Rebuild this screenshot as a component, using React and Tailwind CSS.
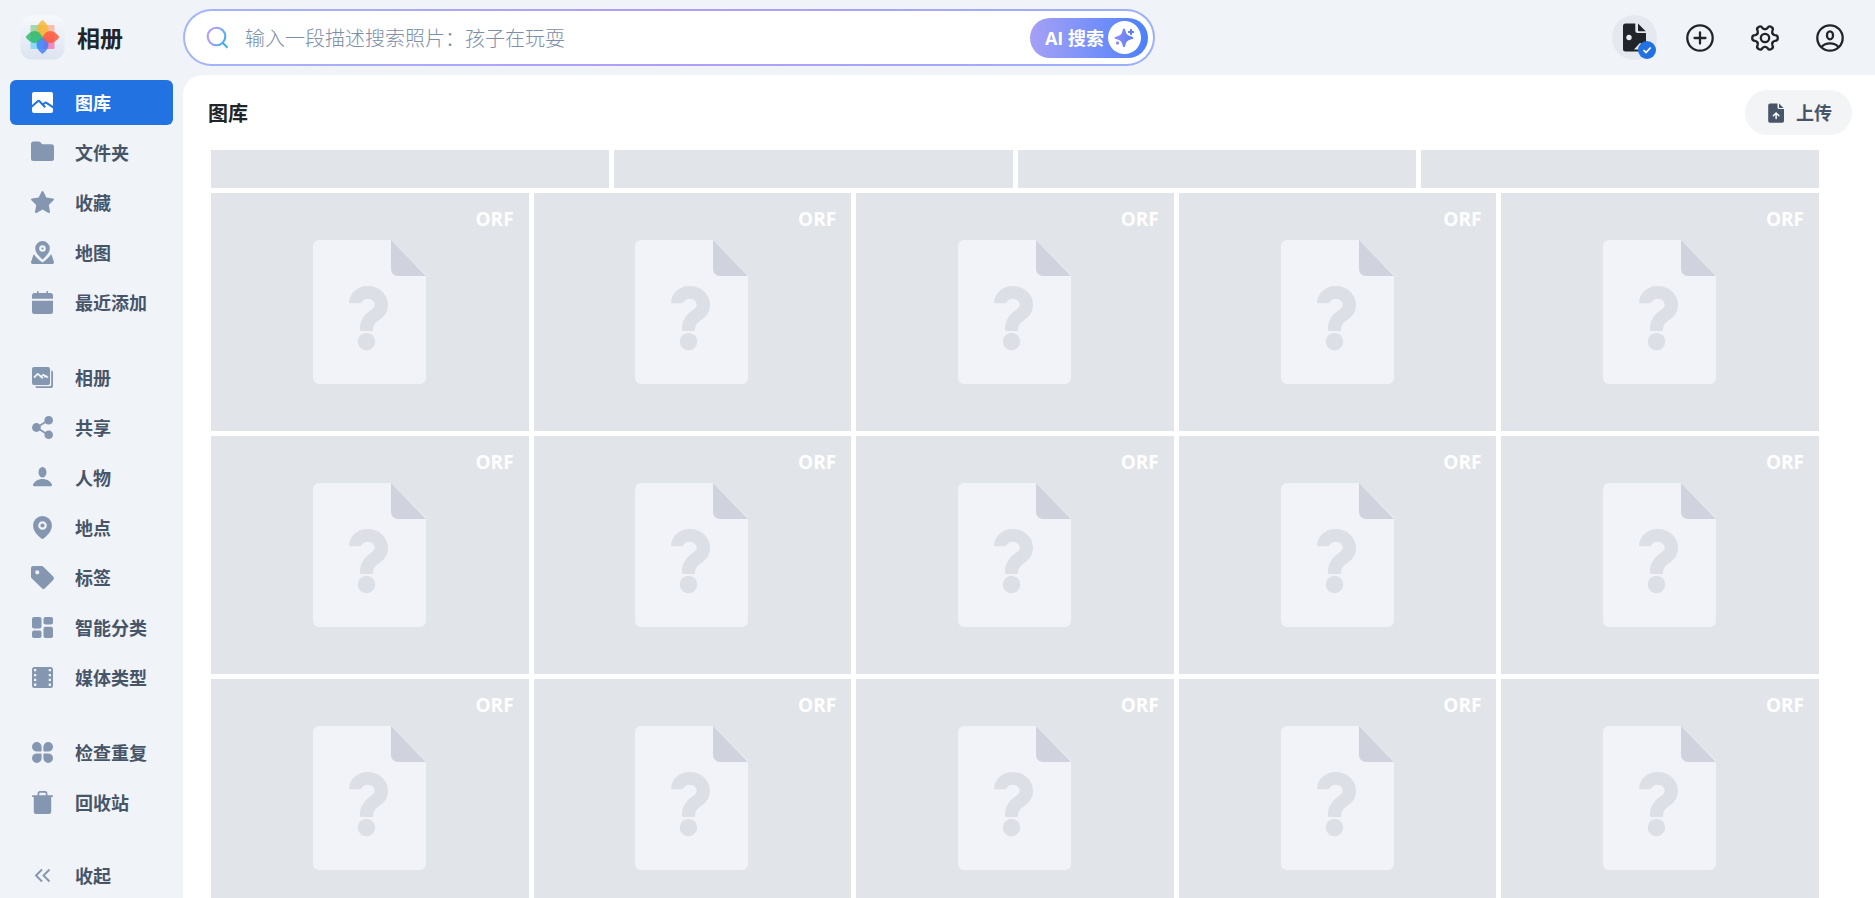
import React from 'react';
import { clsx } from 'clsx';

const icons = {
    gallery: (
        <>
            <rect x="2" y="2" width="21" height="21" rx="2" />
            <path d="M1 17.300l6.700-6.100a1.300 1.300 0 0 1 1.800 0l5.700 6M13 14.500l1.800-1.600a1.300 1.300 0 0 1 1.700 0l7.500 5" fill="none" stroke="#2273e1" strokeWidth="2" />
        </>
    ),
    folder: <path d="M3.500 1.500h5.200c.8 0 1.400.3 1.900.9l1.600 1.800h9.300A2.500 2.500 0 0 1 24 6.700v11.800a2.500 2.500 0 0 1-2.500 2.500h-18A2.500 2.500 0 0 1 1 18.500V4a2.500 2.500 0 0 1 2.500-2.500z" />,
    star: <path d="M11.600 1.600a1 1 0 0 1 1.800 0l2.900 6 6.700.9a1 1 0 0 1 .6 1.800l-4.800 4.600 1.200 6.900a1 1 0 0 1-1.500 1.100l-6-3.300-6 3.300A1 1 0 0 1 5 21.800l1.200-6.900-4.800-4.600A1 1 0 0 1 2 8.500l6.700-.9z" />,
    map: (
        <>
            <path fillRule="evenodd" d="M12.500 1a7.300 7.300 0 0 1 7.300 7.300c0 4.400-3.500 7.600-7.300 11.200-3.800-3.600-7.300-6.800-7.300-11.200A7.300 7.300 0 0 1 12.500 1zm0 4.200a3.300 3.300 0 1 0 0 6.600 3.300 3.300 0 0 0 0-6.600z" />
            <circle cx="12.500" cy="8.500" r="1.100" />
            <path d="M4.200 14.500c1.800 3 5 5.600 8.300 8 3.300-2.400 6.500-5 8.300-8 .5.100.8.500 1 1l2.100 6.300a1.600 1.600 0 0 1-1.500 2.200H2.600a1.600 1.600 0 0 1-1.500-2.200l2.100-6.300c.2-.5.500-.9 1-1z" />
        </>
    ),
    calendar: (
        <path d="M7 1.800a.8.800 0 0 1 1.600 0V3h7.800V1.800a.8.800 0 0 1 1.600 0V3h2.500A2.500 2.500 0 0 1 23 5.500v3.200H2V5.500A2.500 2.500 0 0 1 4.500 3H7zM2 10.700h21v10.800a2.500 2.500 0 0 1-2.500 2.500h-16A2.500 2.500 0 0 1 2 21.500z" />
    ),
    album: (
        <>
            <rect x="2" y="2" width="18" height="18" rx="2" />
            <path d="M4 12.500l3.200-3.200a.9.900 0 0 1 1.300 0l4.300 4M11.300 11.700l1.600-1.500a.9.900 0 0 1 1.300.1l1 1.500.9-.7 1.900 1.500" fill="none" stroke="#f0f3f8" strokeWidth="1.800" />
            <path d="M21.200 5.500c1.200 0 1.800.6 1.800 1.700V21c0 1.200-.8 2-2 2H7.200c-1.200 0-1.800-.7-1.800-1.800h14.300c.9 0 1.500-.6 1.500-1.500z" />
        </>
    ),
    share: (
        <>
            <path d="M6.500 12.500l12-7.300M6.500 12.500l12 7.500" stroke="currentColor" strokeWidth="1.800" />
            <circle cx="6.400" cy="12.500" r="4.400" />
            <circle cx="18.700" cy="5.300" r="4.300" />
            <circle cx="18.700" cy="19.700" r="4.300" />
        </>
    ),
    person: (
        <>
            <ellipse cx="12.500" cy="7.200" rx="4" ry="5.200" />
            <path d="M12.500 14c4.300 0 7.800 2.200 9.400 5.500.4.900-.2 1.700-1.100 1.700H4.200c-.9 0-1.500-.8-1.100-1.700C4.700 16.200 8.200 14 12.500 14z" />
        </>
    ),
    place: (
        <>
            <path fillRule="evenodd" d="M12.500 1a9.400 9.400 0 0 1 9.400 9.400c0 5.300-4 9.500-8.300 13.200a1.700 1.700 0 0 1-2.200 0C7.100 19.900 3.100 15.700 3.100 10.400A9.400 9.400 0 0 1 12.500 1zm0 5.200a4.300 4.300 0 1 0 0 8.600 4.300 4.300 0 0 0 0-8.600z" />
            <circle cx="12.500" cy="10.500" r="2.100" />
        </>
    ),
    tag: <path fillRule="evenodd" d="M3 1h8.500a3 3 0 0 1 2.100.9l9.600 9.700a2.500 2.500 0 0 1 0 3.500l-8 8a2.500 2.500 0 0 1-3.500 0l-9.800-9.600a3 3 0 0 1-.9-2.100V3a2 2 0 0 1 2-2zm4.300 4.200a2.100 2.100 0 1 0 0 4.200 2.100 2.100 0 0 0 0-4.200z" />,
    category: (
        <>
            <rect x="2" y="2" width="9.500" height="11.500" rx="2" />
            <rect x="13.500" y="2" width="9.500" height="7.500" rx="2" />
            <rect x="2" y="15.500" width="9.500" height="7.500" rx="2" />
            <rect x="13.500" y="11.700" width="9.500" height="11.300" rx="2" />
        </>
    ),
    film: (
        <>
            <rect x="2" y="2" width="21" height="21" rx="2.500" />
            <path d="M4 4h2.300v2.300H4zM4 8.900h2.300v2.300H4zM4 13.700h2.300V16H4zM4 18.600h2.300v2.300H4zM18.700 4H21v2.300h-2.300zM18.700 8.900H21v2.300h-2.300zM18.700 13.700H21V16h-2.300zM18.700 18.600H21v2.300h-2.300z" fill="#f0f3f8" />
        </>
    ),
    duplicate: (
        <path d="M6.800 2a4.800 4.800 0 0 1 4.800 4.800v3.700c0 .6-.5 1.100-1.100 1.100H6.800A4.800 4.800 0 0 1 6.800 2zM18.200 2a4.800 4.800 0 0 1 0 9.600h-3.700c-.6 0-1.100-.5-1.100-1.100V6.800A4.800 4.800 0 0 1 18.200 2zM6.800 13.400h3.700c.6 0 1.100.5 1.100 1.100v3.700a4.800 4.800 0 1 1-4.800-4.800zM14.500 13.400h3.700a4.800 4.800 0 1 1-4.800 4.800v-3.700c0-.6.500-1.100 1.100-1.100z" />
    ),
    trash: (
        <>
            <path d="M8.400 6V3.500c0-.9.700-1.600 1.600-1.600h5c.9 0 1.600.7 1.600 1.600V6" fill="none" stroke="currentColor" strokeWidth="1.700" />
            <path d="M2.800 5.200h19.400a.8.800 0 0 1 0 1.700H21.200V21.500a2.500 2.500 0 0 1-2.500 2.500H6.300a2.500 2.500 0 0 1-2.500-2.500V6.900H2.800a.8.800 0 0 1 0-1.700z" />
        </>
    ),
    collapse: <path d="M12 6.500l-6 6 6 6M19.500 6.500l-6 6 6 6" fill="none" stroke="currentColor" strokeWidth="1.900" />,
};

const navGroups = [
    [
        { icon: 'gallery', label: '图库', active: true },
        { icon: 'folder', label: '文件夹' },
        { icon: 'star', label: '收藏' },
        { icon: 'map', label: '地图' },
        { icon: 'calendar', label: '最近添加' },
    ],
    [
        { icon: 'album', label: '相册' },
        { icon: 'share', label: '共享' },
        { icon: 'person', label: '人物' },
        { icon: 'place', label: '地点' },
        { icon: 'tag', label: '标签' },
        { icon: 'category', label: '智能分类' },
        { icon: 'film', label: '媒体类型' },
    ],
    [
        { icon: 'duplicate', label: '检查重复' },
        { icon: 'trash', label: '回收站' },
    ],
];

const Logo = () => (
    <svg className="size-[45px]" viewBox="0 0 45 45" aria-hidden="true">
        <defs>
            <linearGradient id="logo-bg" x1="0" y1="0" x2="0" y2="1">
                <stop offset="0" stopColor="#f6f9fc" />
                <stop offset="1" stopColor="#dce4f0" />
            </linearGradient>
        </defs>
        <rect x=".5" y=".5" width="44" height="44" rx="11" fill="url(#logo-bg)" />
        <g transform="translate(22.500 22)">
            <rect x="-12" y="-12" width="12" height="12" rx="1" fill="#7fce8c" opacity=".7" />
            <rect y="-12" width="12" height="12" rx="1" fill="#fba98a" opacity=".7" />
            <rect x="-12" width="12" height="12" rx="1" fill="#6fd2f5" opacity=".75" />
            <rect width="12" height="12" rx="1" fill="#fb5fa8" opacity=".7" />
            <path d="M0 0C-8-4-8-11 0-17 8-11 8-4 0 0z" fill="#f9b52e" opacity=".8" />
            <path d="M0 0C-8 4-8 11 0 17 8 11 8 4 0 0z" fill="#3d7dfb" opacity=".8" />
            <path d="M0 0C-4-8-11-8-17 0-11 8-4 8 0 0z" fill="#2bb568" opacity=".8" />
            <path d="M0 0C4-8 11-8 17 0 11 8 4 8 0 0z" fill="#fb5a3c" opacity=".85" />
        </g>
    </svg>
);

const NavItem = ({ icon, label, active }) => (
    <button
        className={clsx(
            'flex h-[45px] w-full shrink-0 items-center gap-5 rounded-md px-5 text-[18px] font-bold',
            active ? 'bg-[#2273e1] text-white' : 'text-[#475569]'
        )}
    >
        <svg className={clsx('size-[25px] shrink-0', !active && 'text-[#8496b0]')} viewBox="0 0 25 25" fill="currentColor" aria-hidden="true">
            {icons[icon]}
        </svg>
        <span className="pt-[2px] whitespace-nowrap">{label}</span>
    </button>
);

const SearchBar = () => (
    <div className="h-[57px] w-full max-w-[972px] rounded-full bg-linear-to-r from-[#a5b4fc] via-[#b09cf8] to-[#9bb0fb] p-[2px]">
        <div className="flex h-full items-center rounded-full bg-white pr-[5px] pl-5">
            <svg className="size-[25px] shrink-0" viewBox="0 0 25 25" fill="none" aria-hidden="true">
                <defs>
                    <linearGradient id="search-stroke" x1="0" y1="0" x2="1" y2="0.300">
                        <stop offset="0.300" stopColor="#b39dfa" />
                        <stop offset="1" stopColor="#3fb2ea" />
                    </linearGradient>
                </defs>
                <path d="M11.500 2.700a8.800 8.800 0 1 0 0 17.600 8.800 8.800 0 0 0 0-17.600zM17.800 18l4.700 4.700" stroke="url(#search-stroke)" strokeWidth="2.100" />
            </svg>
            <input
                type="text"
                aria-label="搜索照片"
                placeholder="输入一段描述搜索照片：孩子在玩耍"
                className="ml-[15px] min-w-0 flex-1 bg-transparent pt-[2px] text-[20px] font-light text-slate-700 outline-none placeholder:text-[#7c8ea9]"
            />
            <button className="flex h-10 shrink-0 items-center gap-1 rounded-full bg-linear-to-r from-[#a5a0f5] to-[#4a80fb] pr-[7px] pl-[15px] text-[18px] font-bold text-white">
                <span className="pt-[2px]">AI 搜索</span>
                <svg className="size-[33px]" viewBox="0 0 33 33" aria-hidden="true">
                    <defs>
                        <linearGradient id="spark" x1="0" y1="0" x2="1" y2="0">
                            <stop offset="0" stopColor="#918ff6" />
                            <stop offset="1" stopColor="#5a7cf5" />
                        </linearGradient>
                    </defs>
                    <circle cx="16.500" cy="16.500" r="16.500" fill="#fff" />
                    <path d="M16 7.500c.6 0 1 .4 1.200 1.200 1 4.700 2.200 5.900 7 7 1.600.4 1.600 2 0 2.400-4.800 1.100-6 2.300-7 7-.4 1.600-2 1.600-2.400 0-1-4.700-2.200-5.900-7-7-1.600-.4-1.600-2 0-2.400 4.800-1.100 6-2.300 7-7 .2-.8.600-1.200 1.200-1.200z" fill="url(#spark)" />
                    <path d="M23 8.800v4.400M20.800 11h4.400" stroke="#5a7cf5" strokeWidth="2" strokeLinecap="round" fill="none" />
                    <circle cx="9.500" cy="22" r="1.700" fill="#918ff6" />
                </svg>
            </button>
        </div>
    </div>
);

const HeaderActions = () => (
    <div className="ml-auto flex shrink-0 items-center gap-5 text-[#212529]">
        <button aria-label="备份状态" className="relative flex size-[45px] items-center justify-center rounded-full bg-[#e5e8ef]">
            <svg className="size-[30px]" viewBox="0 0 30 30" fill="currentColor" aria-hidden="true">
                <path d="M5.500.5h9.800v7A2.500 2.500 0 0 0 17.800 10H26v16a2.500 2.500 0 0 1-2.500 2.500h-18A2.500 2.500 0 0 1 3 26V3A2.500 2.500 0 0 1 5.500.5z" />
                <path d="M18 .5l7.700 7.700H19a1 1 0 0 1-1-1z" />
                <circle cx="9" cy="14.500" r="2.700" fill="#e9ecf3" />
                <path d="M14 26.500l5.200-5.800a1.500 1.500 0 0 1 2.200 0L26 25.500v1z" fill="#e9ecf3" />
            </svg>
            <span className="absolute right-[1px] bottom-[1px] flex size-[18px] items-center justify-center rounded-full bg-[#2273e1]">
                <svg className="size-[10px]" viewBox="0 0 10 10" fill="none" stroke="#fff" strokeWidth="1.700" aria-hidden="true">
                    <path d="M1.500 5l2.500 2.500 4.700-5" />
                </svg>
            </span>
        </button>
        <button aria-label="添加" className="flex size-[45px] items-center justify-center">
            <svg className="size-[30px]" viewBox="-15 -15 30 30" fill="none" stroke="currentColor" strokeWidth="2.300" aria-hidden="true">
                <circle r="12.700" />
                <path d="M0-5.500V5.500M-5.500 0H5.500" strokeLinecap="round" />
            </svg>
        </button>
        <button aria-label="设置" className="flex size-[45px] items-center justify-center">
            <svg className="size-[30px]" viewBox="-15 -15 30 30" fill="none" stroke="currentColor" strokeWidth="2.300" strokeLinecap="round" aria-hidden="true">
                <circle r="4.200" />
                {[0, 60, 120, 180, 240, 300].map((angle) => (
                    <path key={angle} transform={`rotate(${angle})`} d="M7.600-4.400Q8.400-3 10-2.800A2.800 2.800 0 0 1 10 2.800Q8.400 3 7.600 4.400" />
                ))}
            </svg>
        </button>
        <button aria-label="账户" className="flex size-[45px] items-center justify-center">
            <svg className="size-[30px]" viewBox="-15 -15 30 30" fill="none" stroke="currentColor" strokeWidth="2.300" aria-hidden="true">
                <circle r="12.700" />
                <ellipse cy="-2.700" rx="3" ry="4" />
                <path d="M-8.500 9C-6.500 6.700-3.500 5.400 0 5.400S6.500 6.700 8.500 9" />
            </svg>
        </button>
    </div>
);

const PhotoTile = () => (
    <div className="relative flex h-[238px] items-center justify-center bg-[#e1e4e9]">
        <svg className="h-[144px] w-[114px]" viewBox="0 0 114 144" aria-hidden="true">
            <path d="M6 0h72l35 35v103a6 6 0 0 1-6 6H6a6 6 0 0 1-6-6V6a6 6 0 0 1 6-6z" fill="#f1f3f8" />
            <path d="M78 0l35 36H85a7 7 0 0 1-7-7z" fill="#d0d2de" />
            <g fill="#dddfe6">
                <path d="M36 62C37 53 44 46 54.500 46 66 46 75 54 75 65c0 6-3 11-8 14.500-4 2.500-7 5.500-7 10V90c0 .6-.4 1-1 1H48.500c-.8 0-1.500-.6-1.500-1.500V88c0-7 4-13 9.500-17 3-2.200 5.200-3.500 5.200-6.500s-3-5.800-7-5.800c-3 0-5 1.300-6.500 3.800-.4.600-.8.800-1.500.8H37.500c-1 0-1.600-.4-1.500-1.300z" />
                <circle cx="53.500" cy="101.500" r="8.700" />
            </g>
        </svg>
        <span className="absolute top-3 right-[15px] text-[19px] leading-7 font-bold text-white">ORF</span>
    </div>
);

const App = () => {
    return (
        <div className="flex h-screen flex-col overflow-hidden bg-[#f0f3f8] font-['Open_Sans','Noto_Sans_CJK_SC',sans-serif]">
            {/* Header */}
            <header className="flex h-[75px] shrink-0 items-center pr-[23px]">
                <div className="flex w-[183px] shrink-0 items-center gap-3 pl-5">
                    <Logo />
                    <h1 className="pt-[2px] text-[23px] font-bold text-[#212529]">相册</h1>
                </div>
                <SearchBar />
                <HeaderActions />
            </header>

            <div className="flex min-h-0 flex-1">
                {/* Sidebar */}
                <nav className="flex w-[183px] shrink-0 flex-col justify-between px-[10px] pt-[5px]">
                    <div className="flex flex-col gap-[30px]">
                        {navGroups.map((group, i) => (
                            <div key={i} className="flex flex-col gap-[5px]">
                                {group.map((item) => (
                                    <NavItem key={item.label} {...item} />
                                ))}
                            </div>
                        ))}
                    </div>
                    <NavItem icon="collapse" label="收起" />
                </nav>

                {/* Gallery */}
                <main className="flex min-w-0 flex-1 flex-col rounded-tl-[20px] bg-white">
                    <div className="flex h-[75px] shrink-0 items-center justify-between pr-[23px] pl-[25px]">
                        <h2 className="pt-[2px] text-[20px] font-bold text-[#212529]">图库</h2>
                        <button className="flex h-[45px] items-center gap-[9px] rounded-full bg-[#f2f4f6] px-5 text-[18px] font-bold text-[#475569]">
                            <svg className="size-[22px]" viewBox="0 0 22 22" fill="currentColor" aria-hidden="true">
                                <path d="M5 1.500h7.500v4A1.500 1.500 0 0 0 14 7h5v12a1.800 1.800 0 0 1-1.800 1.800H5A1.800 1.800 0 0 1 3.200 19V3.300A1.800 1.800 0 0 1 5 1.500z" />
                                <path d="M14 1.500L18.500 6H14.700a.7.700 0 0 1-.7-.7z" />
                                <path d="M11.100 16.500v-5M8.300 13.700l2.800-2.700 2.800 2.700" fill="none" stroke="#fff" strokeWidth="1.500" strokeLinecap="round" />
                            </svg>
                            <span className="pt-[2px]">上传</span>
                        </button>
                    </div>
                    <div className="flex min-h-0 flex-1 flex-col gap-[5px] overflow-hidden pr-[56px] pl-[28px]">
                        <div className="grid shrink-0 grid-cols-4 gap-[5px]">
                            {Array.from({ length: 4 }, (_, i) => (
                                <div key={i} className="h-[38px] bg-[#e1e4e9]" />
                            ))}
                        </div>
                        <div className="grid shrink-0 grid-cols-5 gap-[5px]">
                            {Array.from({ length: 15 }, (_, i) => (
                                <PhotoTile key={i} />
                            ))}
                        </div>
                    </div>
                </main>
            </div>
        </div>
    );
};

export default App;
